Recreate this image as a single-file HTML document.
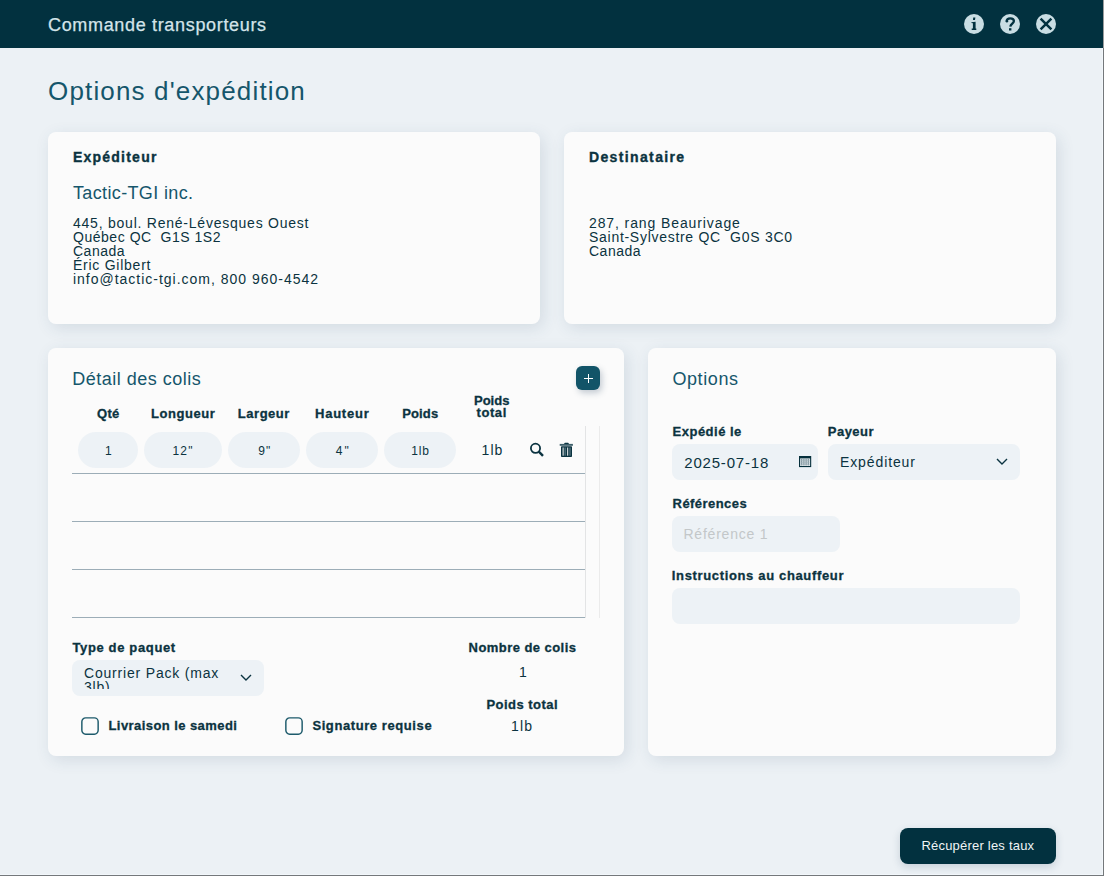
<!DOCTYPE html>
<html><head><meta charset="utf-8">
<style>
*{box-sizing:border-box;margin:0;padding:0}
html,body{width:1104px;height:876px;overflow:hidden}
body{background:#ecf1f5;font-family:"Liberation Sans",sans-serif;color:#0b3340;position:relative}
.abs{position:absolute;white-space:nowrap}
#hdr{position:absolute;left:0;top:0;width:1104px;height:48px;background:#02313f}
.t{left:48px;top:15px;font-size:18px;color:#d4e4e9;line-height:20px;-webkit-text-stroke:0.25px #d4e4e9}
.h1{left:48px;top:75.5px;font-size:26px;color:#15566b;line-height:30px}
.card{position:absolute;background:#fbfbfb;border-radius:8px;box-shadow:3px 4px 16px rgba(50,80,110,0.13)}
.lbl{font-weight:bold;font-size:14px;color:#0b3340;line-height:16px;-webkit-text-stroke:0.35px #0b3340}
.lbl13{font-weight:bold;font-size:13px;color:#0b3340;line-height:16px;-webkit-text-stroke:0.3px #0b3340}
.ttl{font-size:18px;color:#15566b;line-height:20px}
.addr{font-size:14px;line-height:14px;color:#0b3340}
.pill{position:absolute;top:432px;height:36px;border-radius:18px;background:#edf2f6}
.inp{position:absolute;background:#edf2f6;border-radius:8px;height:36px}
.rline{position:absolute;left:72px;width:513px;height:1px;background:#9cadb7}
.cb{position:absolute;width:18px;height:18px;border:1.6px solid #1d5a6b;border-radius:4px}
.v12{font-size:12px;line-height:14px}
.v14{font-size:14px;line-height:16px}
#edge-r{position:absolute;left:1103px;top:0;width:1px;height:876px;background:linear-gradient(#9a9c9d 0,#9a9c9d 48px,#74787b 48px)}
#edge-r2{position:absolute;left:1102px;top:48px;width:1px;height:827px;background:#f2f7fb}
#edge-b{position:absolute;left:0;top:875px;width:1104px;height:1px;background:#74787b}
#edge-b2{position:absolute;left:0;top:874px;width:1103px;height:1px;background:#f2f7fb}
</style></head><body>
<div id="hdr"></div>
<div id="e1" class="abs t" style="letter-spacing:0.667px">Commande transporteurs</div>
<svg class="abs" style="left:964px;top:14px" width="20" height="20" viewBox="0 0 20 20"><circle cx="10" cy="10" r="10" fill="#c9dde3"/><path d="M9.2 3.6L11.4 3.4L11 5.9L9 6.1Z" fill="#02313f"/><path d="M7.4 8.2L11.6 7.7V14.4L12.3 14.6V15.9H7.7V14.6L8.9 14.4V9.3L7.4 9.1Z" fill="#02313f"/></svg>
<svg class="abs" style="left:1000px;top:14px" width="20" height="20" viewBox="0 0 20 20"><circle cx="10" cy="10" r="10" fill="#c9dde3"/><path d="M6.6 7.3C6.8 5.1 8.3 4.3 10.2 4.3C12.5 4.3 13.9 5.4 13.9 7.1C13.9 9.4 10.7 9.8 10.3 12.6" fill="none" stroke="#02313f" stroke-width="2.3"/><circle cx="6.9" cy="7.2" r="1.25" fill="#02313f"/><rect x="9" y="14.2" width="2.4" height="2.3" fill="#02313f"/></svg>
<svg class="abs" style="left:1036px;top:14px" width="20" height="20" viewBox="0 0 20 20"><circle cx="10" cy="10" r="10" fill="#c9dde3"/><path d="M4.6 4.6L15.4 15.4M15.4 4.6L4.6 15.4" stroke="#02313f" stroke-width="2.5"/></svg>

<div id="e2" class="abs h1" style="letter-spacing:1.158px">Options d'expédition</div>

<!-- card 1 -->
<div class="card" style="left:48px;top:132px;width:492px;height:192px"></div>
<div id="e3" class="abs lbl" style="left:73.0px;top:148.5px;letter-spacing:1.222px">Expéditeur</div>
<div id="e4" class="abs ttl" style="left:73.0px;top:183.0px;letter-spacing:0.357px">Tactic-TGI inc.</div>
<div class="abs addr" style="left:73px;top:216px"><span id="e5" style="letter-spacing:0.767px">445, boul. René-Lévesques Ouest</span><br><span id="e6" style="letter-spacing:0.53px">Québec QC&nbsp; G1S 1S2</span><br><span id="e7" style="letter-spacing:0.5px">Canada</span><br><span id="e8" style="letter-spacing:0.746px">Éric Gilbert</span><br><span id="e9" style="letter-spacing:0.987px">info@tactic-tgi.com, 800 960-4542</span></div>

<!-- card 2 -->
<div class="card" style="left:564px;top:132px;width:492px;height:192px"></div>
<div id="e10" class="abs lbl" style="left:589.0px;top:148.5px;letter-spacing:1.364px">Destinataire</div>
<div class="abs addr" style="left:589px;top:216px"><span id="e11" style="letter-spacing:0.894px">287, rang Beaurivage</span><br><span id="e12" style="letter-spacing:0.715px">Saint-Sylvestre QC&nbsp; G0S 3C0</span><br><span id="e13" style="letter-spacing:0.5px">Canada</span></div>

<!-- card 3 -->
<div class="card" style="left:48px;top:348px;width:576px;height:408px"></div>
<div id="e14" class="abs ttl" style="left:72.2px;top:369.41px;letter-spacing:0.507px">Détail des colis</div>
<div class="abs" style="left:576px;top:366px;width:24px;height:24px;border-radius:6px;background:#125468;box-shadow:2px 3px 6px rgba(30,60,90,0.25)"></div>
<div class="abs" style="left:584px;top:377.7px;width:9px;height:1.6px;background:#fff"></div>
<div class="abs" style="left:587.7px;top:374px;width:1.6px;height:9px;background:#fff"></div>

<div id="e15" class="abs lbl13" style="left:97.0px;top:405.71px;letter-spacing:0.3px">Qté</div>
<div id="e16" class="abs lbl13" style="left:151.0px;top:405.71px;letter-spacing:0.543px">Longueur</div>
<div id="e17" class="abs lbl13" style="left:237.8px;top:405.71px;letter-spacing:0.533px">Largeur</div>
<div id="e18" class="abs lbl13" style="left:315.0px;top:405.71px;letter-spacing:0.767px">Hauteur</div>
<div id="e19" class="abs lbl13" style="left:402.2px;top:405.71px;letter-spacing:0.15px">Poids</div>
<div class="abs lbl13" style="left:474px;top:395px;line-height:11.5px;text-align:center"><span id="e20">Poids</span><br><span id="e21" style="letter-spacing:0.6px">total</span></div>

<!-- scroll area -->
<div class="abs" style="left:585px;top:426px;width:1px;height:192px;background:#e3e4e5"></div>
<div class="abs" style="left:599px;top:426px;width:1px;height:192px;background:#ebebeb"></div>
<div class="rline" style="top:473px"></div>
<div class="rline" style="top:521px"></div>
<div class="rline" style="top:569px"></div>
<div class="rline" style="top:617px"></div>

<div class="pill" style="left:78px;width:60px"></div>
<div class="pill" style="left:144px;width:78px"></div>
<div class="pill" style="left:228px;width:72px"></div>
<div class="pill" style="left:306px;width:72px"></div>
<div class="pill" style="left:384px;width:72px"></div>
<div id="e22" class="abs v12" style="left:105px;top:444px">1</div>
<div id="e23" class="abs v12" style="left:172.6px;top:444.0px;letter-spacing:1.1px">12"</div>
<div id="e24" class="abs v12" style="left:258.2px;top:444.0px;letter-spacing:1.2px">9"</div>
<div id="e25" class="abs v12" style="left:335.8px;top:444.0px;letter-spacing:2.0px">4"</div>
<div id="e26" class="abs v12" style="left:411.2px;top:444.0px;letter-spacing:0.9px">1lb</div>
<div id="e27" class="abs v14" style="left:481.6px;top:442.21px;letter-spacing:1.0px">1lb</div>

<svg class="abs" style="left:528px;top:440px" width="18" height="18" viewBox="0 0 18 18"><circle cx="7.5" cy="8.3" r="4.6" fill="none" stroke="#0b3340" stroke-width="1.8"/><path d="M10.8 11.6L15 15.8" stroke="#0b3340" stroke-width="2.4"/></svg>
<svg class="abs" style="left:558px;top:441px" width="16" height="17" viewBox="0 0 16 17"><rect x="6.2" y="1.8" width="4.6" height="2" rx="0.9" fill="#0b3340"/><rect x="1.7" y="2.9" width="13.2" height="1.9" fill="#3d5f6a"/><rect x="3" y="5.3" width="11" height="10.7" rx="0.8" fill="#0b3340"/><rect x="4.6" y="6.5" width="1" height="8.2" fill="#fafafa"/><rect x="9.2" y="6.5" width="1" height="8.2" fill="#fafafa"/><rect x="6.6" y="6.5" width="1" height="8.2" fill="#6f8a94"/><rect x="11.5" y="6.5" width="1" height="8.2" fill="#6f8a94"/></svg>

<div id="e28" class="abs lbl13" style="left:72.4px;top:640.41px;letter-spacing:0.646px">Type de paquet</div>
<div class="inp" style="left:72px;top:660px;width:192px"><div class="abs" style="left:0;top:4px;width:192px;height:25px;overflow:hidden">
  <div id="e29" class="abs v14" style="left:12.0px;top:2.3px;line-height:14px;white-space:normal;width:140px;letter-spacing:0.809px">Courrier Pack (max 3lb)</div>
</div></div>
<svg class="abs" style="left:240px;top:673px" width="12" height="9" viewBox="0 0 12 9"><path d="M1 2L6 7L11 2" fill="none" stroke="#0b3340" stroke-width="1.4"/></svg>
<div id="e30" class="abs lbl13" style="left:468.6px;top:640.41px;letter-spacing:0.442px">Nombre de colis</div>
<div id="e31" class="abs v14" style="left:519px;top:664px">1</div>
<div id="e32" class="abs lbl13" style="left:486.4px;top:696.61px;letter-spacing:0.48px">Poids total</div>
<div id="e33" class="abs v14" style="left:511.0px;top:718.0px;letter-spacing:1.2px">1lb</div>
<svg class="abs" style="left:81px;top:717px" width="18" height="18" viewBox="0 0 18 18"><rect x="0.85" y="0.85" width="16.3" height="16.3" rx="3.8" fill="none" stroke="#1d5a6b" stroke-width="1.45"/></svg>
<div id="e34" class="abs lbl13" style="left:108.5px;top:718.0px;letter-spacing:0.428px">Livraison le samedi</div>
<svg class="abs" style="left:285px;top:717px" width="18" height="18" viewBox="0 0 18 18"><rect x="0.85" y="0.85" width="16.3" height="16.3" rx="3.8" fill="none" stroke="#1d5a6b" stroke-width="1.45"/></svg>
<div id="e35" class="abs lbl13" style="left:312.4px;top:717.61px;letter-spacing:0.588px">Signature requise</div>

<!-- card 4 -->
<div class="card" style="left:648px;top:348px;width:408px;height:408px"></div>
<div id="e36" class="abs ttl" style="left:672.4px;top:369.21px;letter-spacing:0.6px">Options</div>
<div id="e37" class="abs lbl13" style="left:672.6px;top:424.21px;letter-spacing:0.489px">Expédié le</div>
<div id="e38" class="abs lbl13" style="left:827.8px;top:424.3px;letter-spacing:0.48px">Payeur</div>
<div class="inp" style="left:672px;top:444px;width:146px"></div>
<div id="e39" class="abs v14" style="left:684.3px;top:455.21px;letter-spacing:0.8px;font-size:15px">2025-07-18</div>
<svg class="abs" style="left:799px;top:456px" width="13" height="12" viewBox="0 0 13 12"><rect x="0" y="0" width="12.2" height="11.1" fill="#06303c"/><rect x="1.1" y="2.4" width="10" height="7.6" fill="#e4ebee"/><path d="M2.4 3v6.4M4.2 3v6.4M6 3v6.4M7.8 3v6.4M9.6 3v6.4" stroke="#5f7a85" stroke-width="0.8"/><path d="M1.8 4.3h8.8M1.8 6.3h8.8M1.8 8.3h8.8" stroke="#9fb0b7" stroke-width="0.6"/></svg>
<div class="inp" style="left:828px;top:444px;width:192px"></div>
<div id="e40" class="abs v14" style="left:840.0px;top:454.21px;letter-spacing:0.888px">Expéditeur</div>
<svg class="abs" style="left:995px;top:457px" width="14" height="10" viewBox="0 0 14 10"><path d="M2 2L7 7L12 2" fill="none" stroke="#0b3340" stroke-width="1.4"/></svg>
<div id="e41" class="abs lbl13" style="left:672.6px;top:496.11px;letter-spacing:0.444px">Références</div>
<div class="inp" style="left:672px;top:516px;width:168px"></div>
<div id="e42" class="abs v14" style="left:683.4px;top:525.8px;color:#c3c7c9;letter-spacing:0.8px">Référence 1</div>
<div id="e43" class="abs lbl13" style="left:671.8px;top:567.61px;letter-spacing:0.651px">Instructions au chauffeur</div>
<div class="inp" style="left:672px;top:588px;width:348px"></div>

<!-- button -->
<div class="abs" style="left:900px;top:828px;width:156px;height:36px;border-radius:8px;background:#02313f;box-shadow:0 3px 8px rgba(30,60,90,0.18)"></div>
<div id="e44" class="abs" style="left:921.4px;top:838.91px;font-size:13px;line-height:14px;color:#f0f4f6;letter-spacing:0.212px">Récupérer les taux</div>

<div id="edge-r2"></div><div id="edge-b2"></div><div id="edge-b"></div><div id="edge-r"></div>
</body></html>
